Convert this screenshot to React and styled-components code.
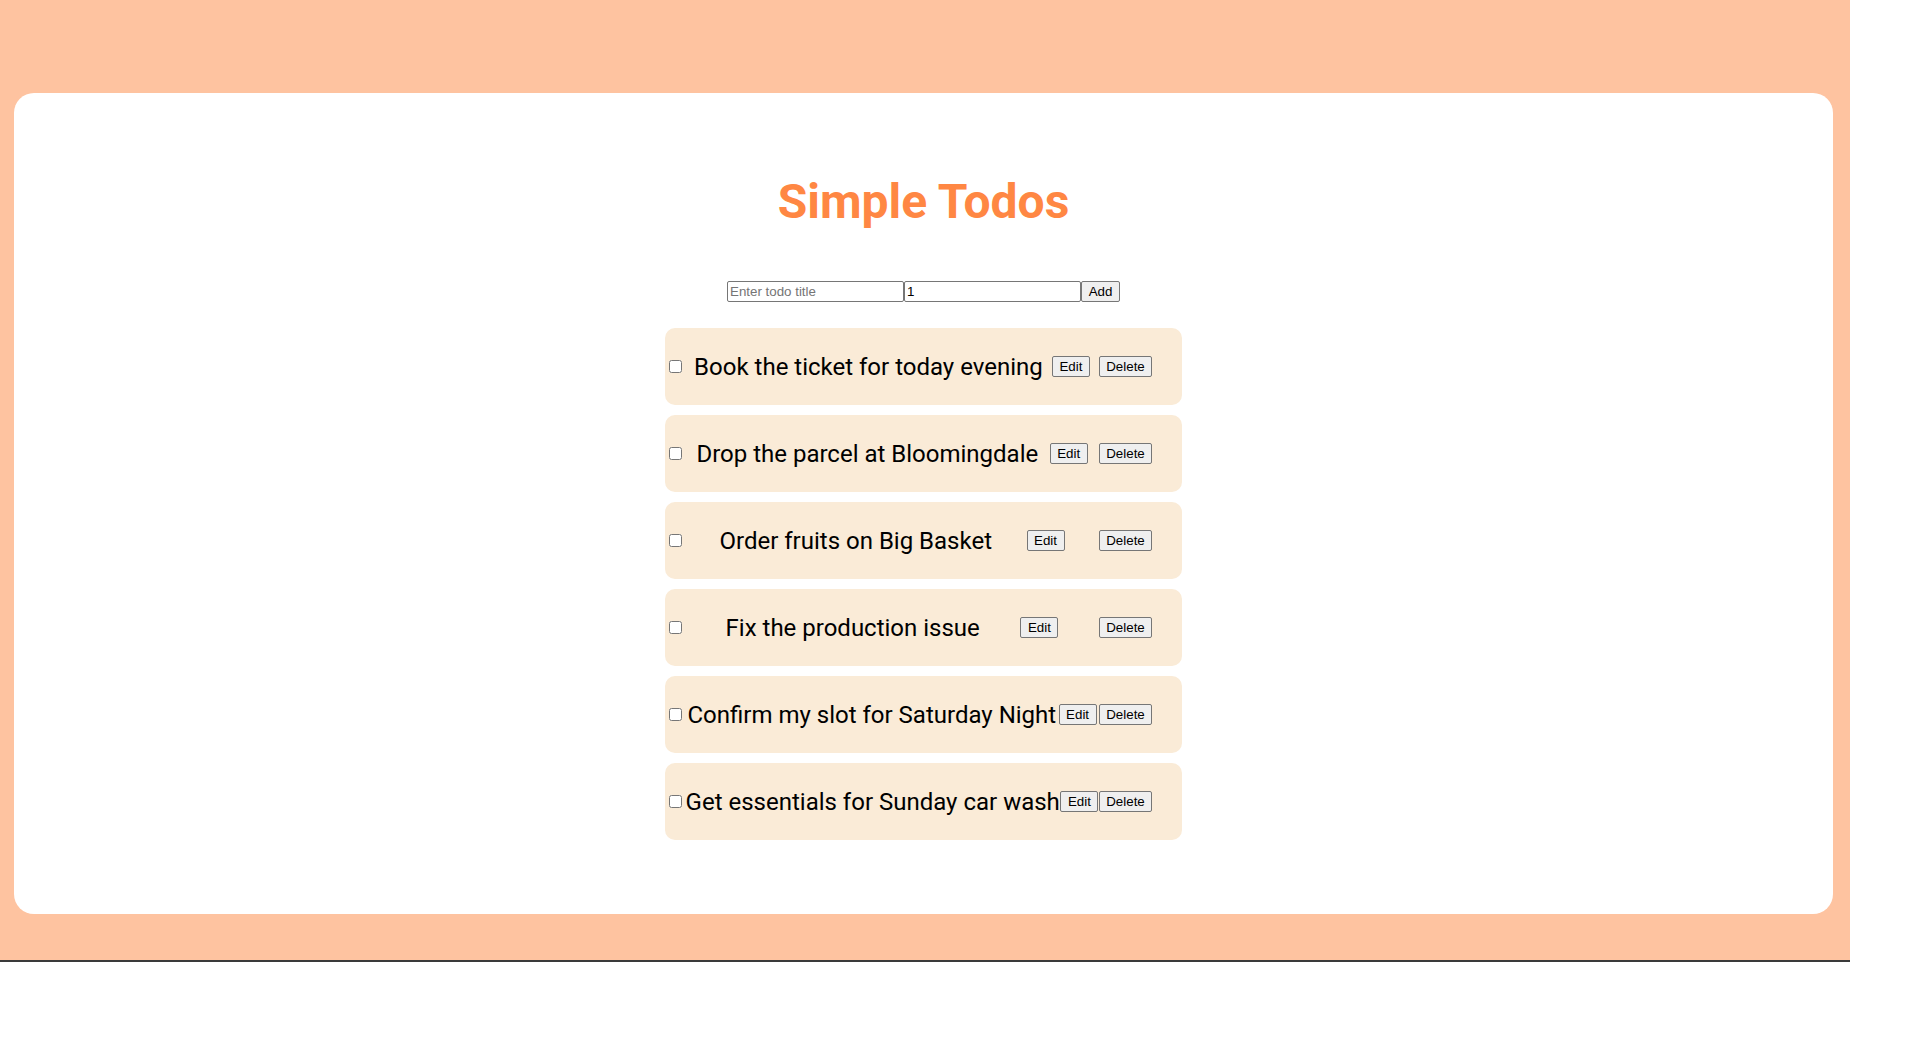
import React from 'react';
import styled, { createGlobalStyle } from 'styled-components';

const GlobalStyle = createGlobalStyle`
  body {
    margin: 0;
    background: #ffffff;
    font-family: Roboto, "Liberation Sans", sans-serif;
  }
`;

const Page = styled.div`
  width: 1850px;
  padding: 93px 17px 46px 14px;
  box-sizing: border-box;
  height: 962px;
  background: #fec3a0;
  border-bottom: 2px solid #3a3a3a;
`;

const Card = styled.div`
  height: 821px;
  background: #ffffff;
  border-radius: 20px;
  display: flex;
  flex-direction: column;
  align-items: center;
`;

const Title = styled.h1`
  margin: 80px 0 0;
  font-family: Roboto, sans-serif;
  font-weight: 700;
  font-size: 48px;
  line-height: 58px;
  color: #ff8743;
`;

const AddRow = styled.div`
  display: flex;
  margin-top: 50px;
  height: 21px;
`;

const TextInput = styled.input`
  width: 177px;
  height: 21px;
  box-sizing: border-box;
  margin: 0;
  padding: 1px 2px;
  border: 1px solid #767676;
  border-radius: 2px;
  font-family: "Liberation Sans", Arial, sans-serif;
  font-size: 13.333px;
  color: #000;
  background: #fff;

  &::placeholder {
    color: #757575;
  }
`;

const Button = styled.button`
  height: 21px;
  box-sizing: border-box;
  margin: 0;
  padding: 1px 6px;
  border: 1px solid #767676;
  border-radius: 2px;
  background: #efefef;
  color: #000;
  font-family: "Liberation Sans", Arial, sans-serif;
  font-size: 13.333px;
  width: ${({ $w }) => $w}px;
`;

const List = styled.ul`
  list-style: none;
  margin: 26px 0 0;
  padding: 0;
  display: flex;
  flex-direction: column;
  gap: 10px;
`;

const Item = styled.li`
  width: 517px;
  height: 77px;
  box-sizing: border-box;
  padding: 0 30px 0 0;
  background: #faebd7;
  border-radius: 10px;
  display: flex;
  align-items: center;
  justify-content: space-between;
`;

const Check = styled.input`
  width: 13px;
  height: 13px;
  margin: 3px 3px 3px 4px;
  flex-shrink: 0;
`;

const ItemText = styled.p`
  margin: 0;
  font-family: Roboto, sans-serif;
  font-size: 24px;
  color: #000;
  white-space: nowrap;
`;

const todos = [
  'Book the ticket for today evening',
  'Drop the parcel at Bloomingdale',
  'Order fruits on Big Basket',
  'Fix the production issue',
  'Confirm my slot for Saturday Night',
  'Get essentials for Sunday car wash',
];

const App = () => {
  return (
    <>
      <GlobalStyle />
      <Page>
        <Card>
          <Title>Simple Todos</Title>
          <AddRow>
            <TextInput type="text" placeholder="Enter todo title" />
            <TextInput type="text" defaultValue="1" />
            <Button $w={39}>Add</Button>
          </AddRow>
          <List>
            {todos.map((todo) => (
              <Item key={todo}>
                <Check type="checkbox" />
                <ItemText>{todo}</ItemText>
                <Button $w={38}>Edit</Button>
                <Button $w={53}>Delete</Button>
              </Item>
            ))}
          </List>
        </Card>
      </Page>
    </>
  );
};

export default App;
